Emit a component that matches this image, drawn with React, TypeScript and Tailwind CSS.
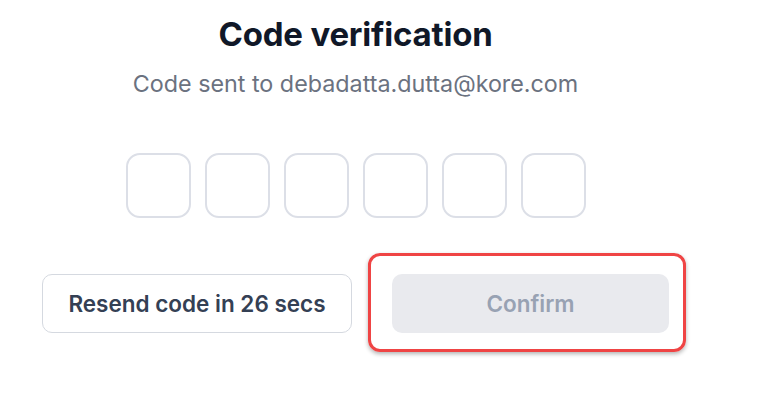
import React from "react";

export default function App() {
  const digits = ["", "", "", "", "", ""];
  return (
    <div className="w-[778px] h-[417px] bg-white font-['Inter',sans-serif] pt-[14px]">
      <div className="ml-[42px] w-[627px] flex flex-col items-center">
        <h1 className="text-[33px] leading-[40px] font-bold text-[#101828] tracking-[-0.2px]">Code verification</h1>
        <p className="mt-[15px] text-[23.3px] leading-[30px] text-[#6b7280]">Code sent to debadatta.dutta@kore.com</p>
        <div className="mt-[54px] flex gap-[14px]">
          {digits.map((d, i) => (
            <input
              key={i}
              value={d}
              readOnly
              className="w-[65px] h-[65px] rounded-[14px] border-2 border-[#dcdfe7] text-center text-2xl outline-none"
            />
          ))}
        </div>
        <div className="mt-[56px] flex gap-[40px] w-full">
          <button className="w-[310px] h-[59px] rounded-[10px] border border-[#d5d9e0] bg-white text-[22.5px] font-semibold text-[#344054]">
            Resend code in 26 secs
          </button>
          <div className="relative">
            <button className="w-[277px] h-[59px] rounded-[10px] bg-[#e9eaee] text-[22.5px] font-semibold text-[#98a2b3]">
              Confirm
            </button>
            <div className="absolute left-[-24px] top-[-21px] w-[318px] h-[99px] rounded-[12px] border-[3px] border-[#ef4444] shadow-[0_2px_4px_rgba(0,0,0,0.3)]" />
          </div>
        </div>
      </div>
    </div>
  );
}
